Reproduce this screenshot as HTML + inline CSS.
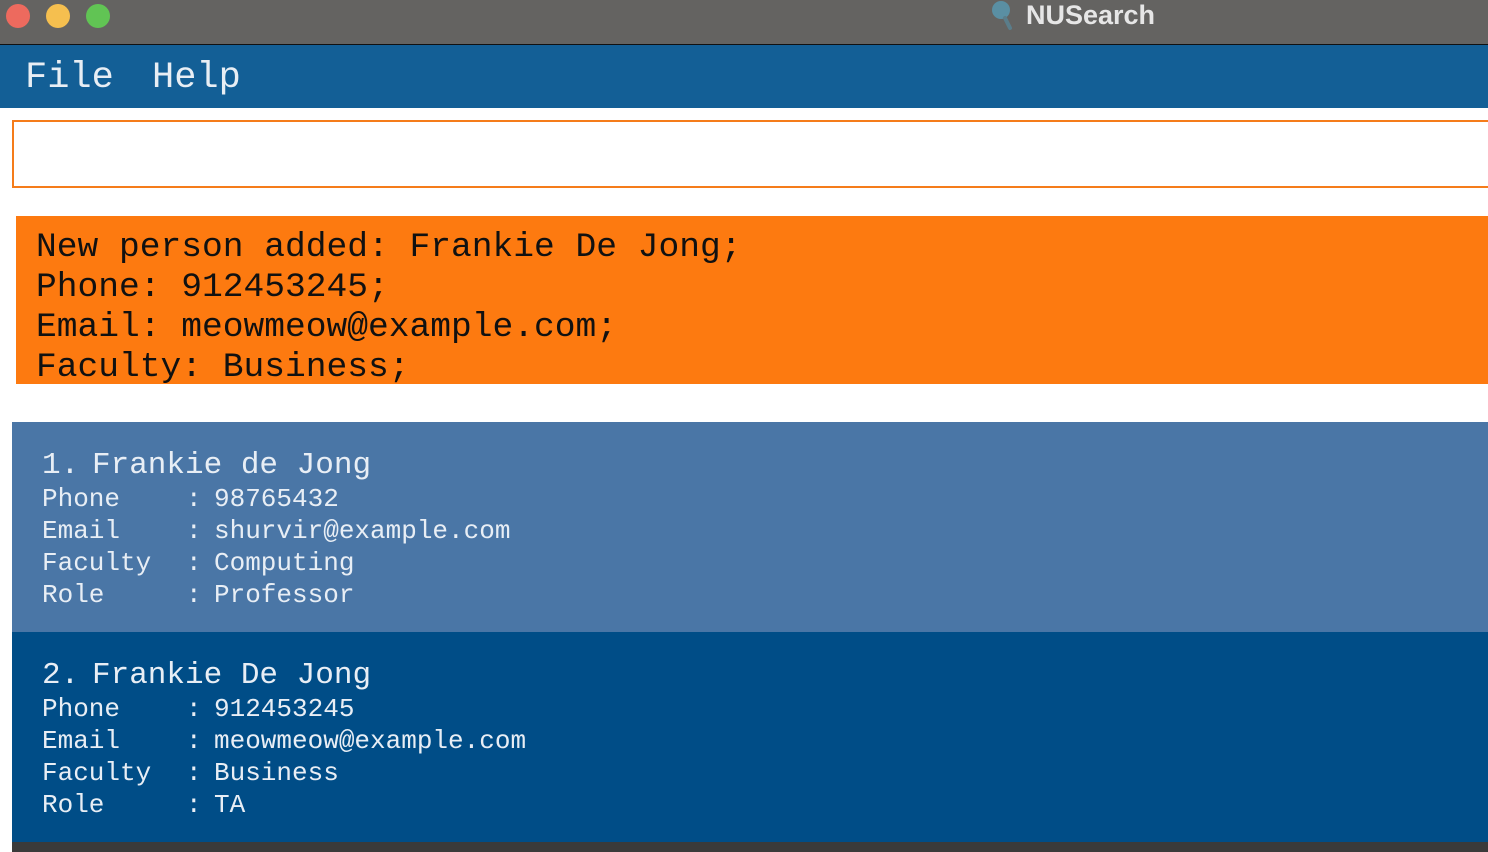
<!DOCTYPE html>
<html><head><meta charset="utf-8"><style>
*{margin:0;padding:0;box-sizing:border-box}
html,body{width:1488px;height:852px;overflow:hidden;background:#fff;position:relative;font-family:"Liberation Mono","Courier New",monospace}
.abs{position:absolute}
#title{left:0;top:0;width:1488px;height:46px;background:#646361;border-bottom:2px solid #111}
.dot{width:24px;height:24px;border-radius:50%;top:4px}
#menu{left:0;top:45px;width:1488px;height:63px;background:#135f96;color:#e8eef4;font-size:37px}
#input{left:12px;top:120px;width:1490px;height:68px;border:2px solid #f57c1a}
#result{left:16px;top:216px;width:1472px;height:168px;background:#fd7a10;color:#111;font-size:34.6px;line-height:40px;padding:12px 0 0 20px;white-space:pre}
.card{left:12px;width:1476px;color:#e8eef5;white-space:pre;padding-left:30px}
.card .t{font-size:31px;height:34px;line-height:34px;position:relative}
.card .t span{position:absolute;left:50px}
.card .f{font-size:26px;line-height:32px}
.l{display:inline-block;width:144px}
.c{display:inline-block;width:28px}
</style></head><body>
<div id="title" class="abs"></div>
<div class="abs dot" style="left:6px;background:#ed6a5e"></div>
<div class="abs dot" style="left:46px;background:#f5bf4f"></div>
<div class="abs dot" style="left:86px;background:#61c454"></div>
<svg class="abs" style="left:988px;top:0" width="30" height="32"><circle cx="13" cy="10" r="9" fill="#5a8fa3"/><line x1="17" y1="18" x2="22" y2="28" stroke="#5a7d8a" stroke-width="4" stroke-linecap="round"/></svg>
<div class="abs" style="left:1026px;top:0;font-family:'Liberation Sans',sans-serif;font-weight:bold;font-size:27px;color:#e6e6e6;line-height:30px">NUSearch</div>
<div id="menu" class="abs"><span class="abs" style="left:25px;top:12px">File</span><span class="abs" style="left:152px;top:12px">Help</span></div>
<div id="input" class="abs"></div>
<div id="result" class="abs">New person added: Frankie De Jong;
Phone: 912453245;
Email: meowmeow@example.com;
Faculty: Business;</div>
<div class="abs card" style="top:422px;height:210px;background:#4a76a6;padding-top:27px"><div class="t">1.<span>Frankie de Jong</span></div><div class="f"><span class="l">Phone</span><span class="c">:</span>98765432
<span class="l">Email</span><span class="c">:</span>shurvir@example.com
<span class="l">Faculty</span><span class="c">:</span>Computing
<span class="l">Role</span><span class="c">:</span>Professor</div></div>
<div class="abs card" style="top:632px;height:210px;background:#004d87;padding-top:27px"><div class="t">2.<span>Frankie De Jong</span></div><div class="f"><span class="l">Phone</span><span class="c">:</span>912453245
<span class="l">Email</span><span class="c">:</span>meowmeow@example.com
<span class="l">Faculty</span><span class="c">:</span>Business
<span class="l">Role</span><span class="c">:</span>TA</div></div>
<div class="abs" style="left:12px;top:842px;width:1476px;height:10px;background:#3a3a3a"></div>
</body></html>
